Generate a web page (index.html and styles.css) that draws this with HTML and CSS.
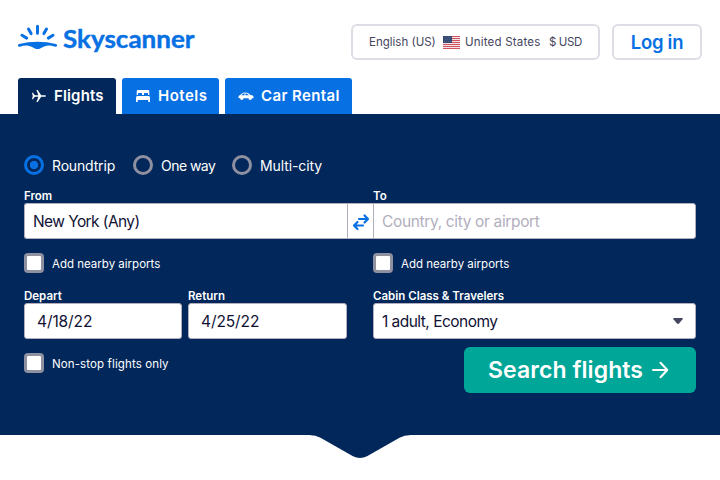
FILE: index.html
```html
<!DOCTYPE html>
<html lang="en">
<head>
<meta charset="utf-8">
<title>Skyscanner</title>
<link rel="stylesheet" href="styles.css">
</head>
<body>
<header class="header">
  <a class="logo" aria-label="Skyscanner">
    <svg width="178" height="32" viewBox="0 0 178 32">
      <g stroke="#0770e3" stroke-width="3" stroke-linecap="round" fill="none">
        <path d="M19.5 2.200v7M10.500 5.100l2.600 4.500M28.500 5.100l-2.600 4.500M4 11.300l4.700 2.800M35 11.300l-4.700 2.800"/>
      </g>
      <path fill="#0770e3" d="M1 19.900Q10 17.800 19.500 17.800T38 19.900Q39.300 20.400 39 21.700Q38.600 23 37.200 22.700Q32.500 21.300 28.500 21.700Q25.500 22.200 22.500 24.200Q19.500 26 16.500 24.200Q13.500 22.200 10.500 21.700Q6.500 21.300 1.800 22.700Q.4 23 0 21.700Q-.3 20.400 1 19.900z"/>
      <text class="logo-text" x="45" y="23.500" textLength="131.500" lengthAdjust="spacingAndGlyphs">Skyscanner</text>
    </svg>
  </a>
  <div class="actions">
    <button class="locale">
      <span class="t-lang">English (US)</span>
      <svg class="flag" width="17" height="13" viewBox="0 0 17 13">
        <path fill="#f3e3e6" d="M0 0h17v13H0z"/>
        <path stroke="#d0555f" d="M0 .5h17M0 2.500h17M0 4.500h17M0 6.500h17M0 8.500h17M0 10.500h17M0 12.500h17"/>
        <path fill="#354a72" d="M0 0h9v7H0z"/>
        <path stroke="#4f618a" stroke-dasharray="1 1" d="M1 1.500h7M2 3.500h6M1 5.500h7"/>
      </svg>
      <span class="t-country">United States</span>
      <span class="t-currency">$ USD</span>
    </button>
    <button class="login"><span>Log in</span></button>
  </div>
</header>
<nav class="tabs">
  <a class="tab tab-flights active">
    <svg width="16" height="16" viewBox="0 0 16 16"><path fill="#fff" d="M1 4.800h1L3.800 7.200h3.600L5.400 2h1.300L10.200 7.200h3.600q1.200.2 1.200.8t-1.200.8h-3.600L6.700 14H5.400L7.400 8.800H3.800L2 11.200H1L1.800 8z"/></svg>
    <span>Flights</span>
  </a>
  <a class="tab tab-hotels">
    <svg width="16" height="16" viewBox="0 0 16 16"><path fill="#fff" d="M3 2h10q1.300 0 1.300 1.300V7H13V5.500Q13 5 12.500 5h-3Q9 5 9 5.500V7H7V5.500Q7 5 6.500 5h-3Q3 5 3 5.500V7H1.700V3.300Q1.700 2 3 2zM2.500 8h11q1.500 0 1.500 1.500V14h-1.700v-2H2.700v2H1V9.500Q1 8 2.500 8z"/></svg>
    <span>Hotels</span>
  </a>
  <a class="tab tab-cars">
    <svg width="16" height="16" viewBox="0 0 16 16"><path fill="#fff" fill-rule="evenodd" d="M.5 8.800Q.6 7.500 2 6.900L4 5.400Q5 4.500 7 4.500q2.300 0 3.400.8L12.500 7q3 .2 3 1.900v1.400h-1.600a1.700 1.700 0 0 1-3.400 0h-5a1.700 1.700 0 0 1-3.400 0L.5 10zM3.300 7.200h3.300V5.300Q5.500 5.300 4.800 5.900zM7.500 5.300V7.200h3.500L9.500 5.900Q8.700 5.300 7.500 5.300z"/></svg>
    <span>Car Rental</span>
  </a>
</nav>
<main class="search">
  <div class="trip">
    <label class="option opt-round"><i class="radio checked"></i><span>Roundtrip</span></label>
    <label class="option opt-one"><i class="radio"></i><span>One way</span></label>
    <label class="option opt-multi"><i class="radio"></i><span>Multi-city</span></label>
  </div>
  <div class="columns">
    <section class="left">
      <div class="label"><span>From</span></div>
      <div class="field origin">
        <span class="t-origin">New York (Any)</span>
        <button class="swap" aria-label="Swap">
          <svg width="18" height="18" viewBox="0 0 18 18" fill="none" stroke="#0770e3" stroke-width="2.200" stroke-linecap="round" stroke-linejoin="round"><path d="M7 6h9M12.500 2.500L16 6l-3.500 3.500M11 12.500H2M5.500 9L2 12.500 5.500 16"/></svg>
        </button>
      </div>
      <label class="check"><i class="box"></i><span class="t-nearby">Add nearby airports</span></label>
      <div class="dates">
        <div class="date">
          <div class="label"><span>Depart</span></div>
          <div class="field"><span class="t-date">4/18/22</span></div>
        </div>
        <div class="date">
          <div class="label"><span>Return</span></div>
          <div class="field"><span class="t-date">4/25/22</span></div>
        </div>
      </div>
      <label class="check"><i class="box"></i><span class="t-nonstop">Non-stop flights only</span></label>
    </section>
    <section class="right">
      <div class="label"><span>To</span></div>
      <div class="field destination"><span class="t-dest">Country, city or airport</span></div>
      <label class="check"><i class="box"></i><span class="t-nearby">Add nearby airports</span></label>
      <div class="label"><span>Cabin Class &amp; Travelers</span></div>
      <div class="field cabin">
        <span class="t-cabin">1 adult, Economy</span>
        <svg width="10" height="6" viewBox="0 0 10 6"><path fill="#444560" d="M1 0h8q1.200.3.600 1.300L6 5.500q-1 .8-2 0L.4 1.300Q-.2.300 1 0z"/></svg>
      </div>
      <button class="submit">
        <span>Search flights</span>
        <svg width="18" height="18" viewBox="0 0 18 18" fill="none" stroke="#fff" stroke-width="2" stroke-linecap="round" stroke-linejoin="round"><path d="M2 9h14M9.500 1.800L16.300 9l-6.800 7.200"/></svg>
      </button>
    </section>
  </div>
</main>
<svg class="notch" width="108" height="23" viewBox="0 0 108 23"><path fill="#02275a" d="M3 0h102q-7 .3-11.500 2.800L61 21.300q-7 3.400-14 0L14.500 2.800Q10 .3 3 0z"/></svg>
</body>
</html>
```
FILE: styles.css
```css
* { box-sizing: border-box; }
body { margin: 0; width: 720px; height: 480px; overflow: hidden; background: #fff; font-family: Inter, "Liberation Sans", sans-serif; color: #111236; }
button { margin: 0; padding: 0; font-family: inherit; background: none; border: 0; text-align: left; }
svg { display: block; flex: none; }
span { white-space: nowrap; }
.header { display: flex; justify-content: space-between; height: 78px; padding: 24px 18px 0; }
.logo-text { font-family: Lato, sans-serif; font-weight: 700; font-size: 24px; fill: #0770e3; stroke: #0770e3; stroke-width: .4px; }
.actions { display: flex; gap: 12px; }
.locale, .login { display: flex; align-items: center; height: 36px; border: 2px solid #dddde5; border-radius: 6px; }
.locale { width: 249px; padding-left: 16px; font-size: 11.5px; color: #444560; }
.t-lang { width: 74px; }
.t-country { width: 84px; margin-left: 5px; letter-spacing: .2px; }
.t-currency { letter-spacing: -.4px; }
.login { width: 90px; justify-content: center; color: #0770e3; font-size: 18.5px; font-weight: 600; }
.login span { letter-spacing: -.3px; }
.tabs { display: flex; gap: 6px; padding-left: 18px; height: 36px; }
.tab { display: flex; align-items: center; gap: 7px; padding-left: 13px; background: #0770e3; color: #fff; border-radius: 3px 3px 0 0; font-size: 15px; font-weight: 600; }
.tab span { padding-bottom: 2px; }
.tab-flights { width: 98px; background: #02275a; letter-spacing: .15px; }
.tab-hotels { width: 97px; letter-spacing: .5px; }
.tab-cars { width: 127px; letter-spacing: .4px; }
.search { height: 321px; padding: 40px 24px 0; background: #02275a; color: #fff; }
.trip { display: flex; height: 22px; font-size: 14px; }
.option { display: flex; align-items: center; gap: 8px; }
.opt-round { width: 109px; letter-spacing: -.17px; }
.opt-one { width: 99px; letter-spacing: -.55px; }
.opt-multi { letter-spacing: -.1px; }
.radio { width: 20px; height: 20px; border: 3px solid #8f90a0; border-radius: 50%; }
.checked { border-color: #0770e3; background: radial-gradient(circle, #0770e3 3.8px, transparent 4.5px); }
.columns { display: grid; grid-template-columns: 323px 323px; gap: 26px; padding-top: 12px; }
.label { height: 15px; font-size: 11.5px; line-height: 16px; font-weight: 600; }
.field { display: flex; align-items: center; height: 36px; padding-left: 8px; background: #fff; color: #111236; border: 1px solid #b2aebd; border-radius: 3px; font-size: 15.5px; }
.field span { padding-top: 1px; }
.origin { width: 324px; justify-content: space-between; border-right: 0; border-radius: 3px 0 0 3px; }
.t-origin { letter-spacing: -.58px; }
.swap { display: flex; align-items: center; justify-content: center; width: 27px; height: 34px; margin-right: -26px; padding: 2px 1px 0 0; border-left: 1px solid #b2aebd; background: #fff; box-shadow: 0 1px #b2aebd, 0 -1px #b2aebd; }
.destination { border-radius: 0 3px 3px 0; color: #b2aebd; }
.t-dest { letter-spacing: -.35px; }
.t-date { letter-spacing: -.1px; }
.t-cabin { letter-spacing: -.53px; }
.check { display: flex; align-items: center; gap: 8px; height: 20px; margin: 14px 0 15px; font-size: 11.5px; }
.check span { padding-top: 2px; }
.t-nonstop { letter-spacing: .12px; }
.box { width: 20px; height: 20px; border: 3px solid #8f90a0; border-radius: 4px; background: #fff; }
.dates { display: grid; grid-template-columns: 158px 159px; gap: 6px; }
.dates .field { padding-left: 12px; }
.cabin { justify-content: space-between; padding-right: 12px; }
.submit { display: flex; align-items: center; justify-content: space-between; width: 232px; height: 46px; margin: 8px 0 0 auto; padding: 0 27px 0 24px; border-radius: 6px; background: #00a698; color: #fff; font-size: 23px; font-weight: 600; letter-spacing: .08px; }
.notch { margin: 0 auto; }
```
